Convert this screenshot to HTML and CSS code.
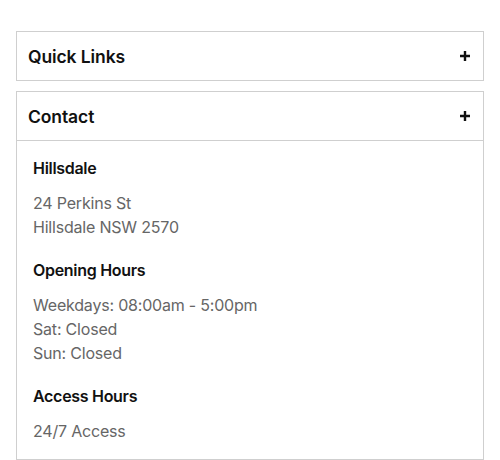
FILE: index.html
```html
<!DOCTYPE html>
<html lang="en">
<head>
<meta charset="utf-8">
<title>Footer accordion</title>
<link rel="stylesheet" href="styles.css">
</head>
<body>
<div class="accordion">
  <section class="panel">
    <div class="panel-head">
      <span class="panel-title">Quick Links</span>
      <svg class="plus" width="12" height="12" viewBox="0 0 12 12" aria-hidden="true"><path d="M6 1v10M1 6h10" stroke="#111" stroke-width="2.4" fill="none"/></svg>
    </div>
  </section>
  <section class="panel">
    <div class="panel-head">
      <span class="panel-title">Contact</span>
      <svg class="plus" width="12" height="12" viewBox="0 0 12 12" aria-hidden="true"><path d="M6 1v10M1 6h10" stroke="#111" stroke-width="2.4" fill="none"/></svg>
    </div>
    <div class="panel-body">
      <div class="group">
        <h4 class="group-title">Hillsdale</h4>
        <p class="group-text">24 Perkins St<br>Hillsdale NSW 2570</p>
      </div>
      <div class="group">
        <h4 class="group-title">Opening Hours</h4>
        <p class="group-text">Weekdays: 08:00am - 5:00pm<br>Sat: Closed<br>Sun: Closed</p>
      </div>
      <div class="group">
        <h4 class="group-title">Access Hours</h4>
        <p class="group-text">24/7 Access</p>
      </div>
    </div>
  </section>
</div>
</body>
</html>
```
FILE: styles.css
```css
html, body {
  margin: 0;
  padding: 0;
  background: #fff;
}
body {
  font-family: Inter, "Noto Sans", sans-serif;
  color: #111;
}
.accordion {
  display: flex;
  flex-direction: column;
  gap: 10px;
  padding: 31px 16px 0 16px;
}
.panel {
  border: 1px solid #cfcfcf;
}
.panel-head {
  height: 48px;
  display: flex;
  align-items: center;
  justify-content: space-between;
  padding: 0 12px 0 11px;
}
.panel-title {
  font-size: 17.5px;
  font-weight: 600;
  letter-spacing: -0.1px;
}
.plus {
  display: block;
}
.panel-body {
  border-top: 1px solid #cfcfcf;
  padding: 15px 16px 16px 16px;
  display: flex;
  flex-direction: column;
  gap: 19px;
}
.group-title {
  margin: 0 0 11px 0;
  font-size: 16px;
  line-height: 24px;
  font-weight: 600;
  letter-spacing: -0.3px;
  color: #111;
}
.group-text {
  margin: 0;
  font-size: 16px;
  line-height: 24px;
  font-weight: 400;
  letter-spacing: -0.2px;
  color: #666;
}
```
